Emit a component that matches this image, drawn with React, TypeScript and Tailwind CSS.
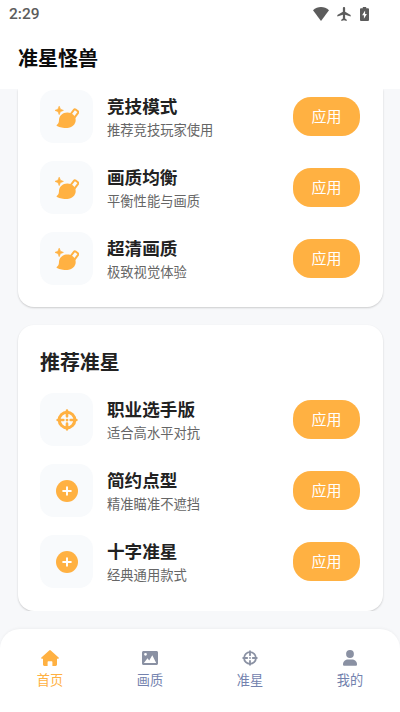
import type { ReactNode } from 'react';

type IconProps = { className?: string };

function BrushIcon({ className }: IconProps) {
    return (
        <svg viewBox="0 0 24 24" fill="currentColor" className={className}>
            <path d="M4.200 1.200 5.400 4.200 8.400 5.400 5.400 6.600 4.200 9.600 3 6.600 0 5.400 3 4.200Z" stroke="currentColor" strokeWidth=".7" strokeLinejoin="round" />
            <path d="M12.300 7.600c4.800 0 8.400 3.400 8.400 7.500 0 4.500-3.700 7.800-8.500 7.800-3.900 0-7.500-.6-10.200-2-.6-.3-.5-.9 0-1.200 1.600-.9 1.900-2.200 2-4.600C4.100 10.800 7.700 7.600 12.300 7.600Z" />
            <rect x="16.700" y="4.600" width="5.200" height="8" rx="1.200" transform="rotate(37 19.300 8.600)" fill="none" stroke="currentColor" strokeWidth="2" />
        </svg>
    );
}

function TargetIcon({ className }: IconProps) {
    return (
        <svg viewBox="0 0 24 24" fill="none" stroke="currentColor" className={className}>
            <circle cx="12" cy="12" r="8.500" strokeWidth="3.300" />
            <path d="M12 1.800v6.200M12 16v6.200M1.800 12H8M16 12h6.200" strokeWidth="2.900" strokeLinecap="round" />
            <circle cx="12" cy="12" r="1.500" fill="currentColor" stroke="none" />
        </svg>
    );
}

// thinner version of the crosshair for the tab bar
function TargetTabIcon() {
    return (
        <svg viewBox="0 0 16 16" fill="none" stroke="currentColor" strokeWidth="1.800" className="size-4">
            <circle cx="8" cy="8" r="5.900" />
            <path d="M8 1.200v4M8 10.800v4M1.200 8h4M10.800 8h4" strokeLinecap="round" />
            <circle cx="8" cy="8" r=".9" fill="currentColor" stroke="none" />
        </svg>
    );
}

function PlusIcon({ className }: IconProps) {
    return (
        <svg viewBox="0 0 24 24" className={className}>
            <circle cx="12" cy="12" r="12" fill="currentColor" />
            <path d="M12 7.800v8.400M7.800 12h8.400" stroke="#fff" strokeWidth="2.100" strokeLinecap="round" />
        </svg>
    );
}

function HomeIcon() {
    return (
        <svg viewBox="0 0 18 16" fill="currentColor" className="h-4 w-[18px]">
            <path d="M8.200.4a1.200 1.200 0 0 1 1.600 0l7.800 7.100c.6.500.3 1.300-.5 1.300H16v5.700c0 .8-.6 1.400-1.400 1.400h-3.200v-3.700c0-.6-.4-1-1-1H7.600c-.6 0-1 .4-1 1v3.700H3.400C2.600 15.900 2 15.300 2 14.500V8.800H.9C.1 8.800-.2 8 .4 7.500Z" />
        </svg>
    );
}

function PhotoIcon() {
    return (
        <svg viewBox="0 0 16 14" fill="currentColor" className="h-3.5 w-4">
            <path
                fillRule="evenodd"
                d="M1.500 0h13c.8 0 1.500.7 1.500 1.500v11c0 .8-.7 1.500-1.500 1.500h-13C.7 14 0 13.300 0 12.500v-11C0 .7.700 0 1.500 0Zm2 1.900a1.400 1.400 0 1 0 0 2.800 1.400 1.400 0 0 0 0-2.800ZM1.900 12h12.300L10.300 4.300 7.200 9.500 5.500 7.300Z"
            />
        </svg>
    );
}

function UserIcon() {
    return (
        <svg viewBox="0 0 14 16" fill="currentColor" className="h-4 w-3.5">
            <circle cx="7" cy="4" r="3.900" />
            <path d="M0 14.200C0 11.300 2.500 9.500 5 9.500h4c2.500 0 5 1.800 5 4.700 0 1-.5 1.600-1.400 1.600H1.400C.5 15.800 0 15.200 0 14.200Z" />
        </svg>
    );
}

const presets = [
    { icon: BrushIcon, size: 'size-6', title: '竞技模式', desc: '推荐竞技玩家使用' },
    { icon: BrushIcon, size: 'size-6', title: '画质均衡', desc: '平衡性能与画质' },
    { icon: BrushIcon, size: 'size-6', title: '超清画质', desc: '极致视觉体验' },
];

const crosshairs = [
    { icon: TargetIcon, size: 'size-[22px]', title: '职业选手版', desc: '适合高水平对抗' },
    { icon: PlusIcon, size: 'size-[22px]', title: '简约点型', desc: '精准瞄准不遮挡' },
    { icon: PlusIcon, size: 'size-[22px]', title: '十字准星', desc: '经典通用款式' },
];

const tabs: { label: string; icon: ReactNode; active?: boolean }[] = [
    { label: '首页', icon: <HomeIcon />, active: true },
    { label: '画质', icon: <PhotoIcon /> },
    { label: '准星', icon: <TargetTabIcon /> },
    { label: '我的', icon: <UserIcon /> },
];

function Rows({ items }: { items: typeof presets }) {
    return (
        <div className="flex flex-col gap-[18px]">
            {items.map((item) => {
                const Icon = item.icon;
                return (
                    <div key={item.title} className="flex h-[53.200px] items-center">
                        <div className="flex size-[53px] shrink-0 items-center justify-center rounded-[14px] bg-[#f8fafc] pt-px text-[#ffb142]">
                            <Icon className={item.size} />
                        </div>
                        <div className="ml-3.5 flex-1 pt-[3px]">
                            <h3 className="text-[17.600px] leading-6 font-bold text-[#222]">{item.title}</h3>
                            <p className="text-[13.300px] leading-6 text-[#666]">{item.desc}</p>
                        </div>
                        <button className="h-[39px] w-[67px] rounded-[18px] bg-[#ffb142] pb-[2px] text-[15px] leading-none text-white">应用</button>
                    </div>
                );
            })}
        </div>
    );
}

export default function App() {
    return (
        <div className="flex h-[712px] w-[400px] flex-col overflow-hidden bg-[#f7f8fa] font-['Noto_Sans_CJK_SC',sans-serif]">
            {/* Status bar + title */}
            <header className="h-[89px] shrink-0 bg-white">
                <div className="flex h-7 items-center justify-between pr-[31px] pl-[9px] text-[#5c5c5c]">
                    <span className="pt-0.5 font-[Roboto,sans-serif] text-[15.500px] leading-none font-medium">2:29</span>
                    <div className="flex items-center gap-2 pb-px">
                        <svg viewBox="0 0 16 14" fill="currentColor" className="h-3.5 w-4">
                            <path d="M0 3.300C4.600-1.100 11.400-1.100 16 3.300L8 14Z" />
                        </svg>
                        <svg viewBox="2 2 20 20" fill="currentColor" className="size-3.5">
                            <path d="M21.500 15.500v-2L13.600 8.700V3.500c0-.8-.7-1.500-1.600-1.500s-1.600.7-1.600 1.500v5.200l-7.900 4.800v2l7.900-2.400v5.400l-2.300 1.600V22l3.900-1 3.900 1v-1.900l-2.300-1.600v-5.400Z" />
                        </svg>
                        <svg viewBox="0 0 9 14" fill="currentColor" className="ml-px h-3.5 w-[9px]">
                            <path fillRule="evenodd" d="M2.800 0h3.400v1.300h1.900c.5 0 .9.400.9.900v10.900c0 .5-.4.900-.9.900H.9c-.5 0-.9-.4-.9-.9V2.200c0-.5.400-.9.900-.9h1.900ZM5.100 3.500 2.100 8.300h1.800v3.500L6.900 7H5.100Z" />
                        </svg>
                    </div>
                </div>
                <h1 className="mt-[15px] pl-[18px] text-[20px] leading-[30px] font-bold text-[#0c0c0c]">准星怪兽</h1>
            </header>

            <main className="flex h-[522px] shrink-0 flex-col gap-[18px] overflow-hidden px-[17.500px]">
                <section className="h-[218px] shrink-0 rounded-b-2xl bg-white px-[22.500px] pt-[0.500px] shadow-[0_1px_2px_rgba(0,0,0,0.180)]">
                    <Rows items={presets} />
                </section>
                <section className="h-[286px] shrink-0 rounded-2xl bg-white px-[22.500px] pt-[21.500px] shadow-[0_1px_2px_rgba(0,0,0,0.180)]">
                    <h2 className="mb-4 text-[19.900px] leading-[30px] font-bold text-[#222]">推荐准星</h2>
                    <Rows items={crosshairs} />
                </section>
            </main>

            {/* Tab bar */}
            <nav className="mt-[18px] grid flex-1 grid-cols-4 rounded-t-[20px] bg-white pt-[21px] shadow-[0_-1px_3px_rgba(0,0,0,0.040)]">
                {tabs.map((tab) => (
                    <div key={tab.label} className={`flex flex-col items-center ${tab.active ? 'text-[#ffb142]' : 'text-[#8a91a3]'}`}>
                        <span className="flex h-4 items-center">{tab.icon}</span>
                        <span className={`mt-1 text-[13.200px] leading-5 ${tab.active ? 'text-[#ffb142]' : 'text-[#7382ae]'}`}>{tab.label}</span>
                    </div>
                ))}
            </nav>
        </div>
    );
}
